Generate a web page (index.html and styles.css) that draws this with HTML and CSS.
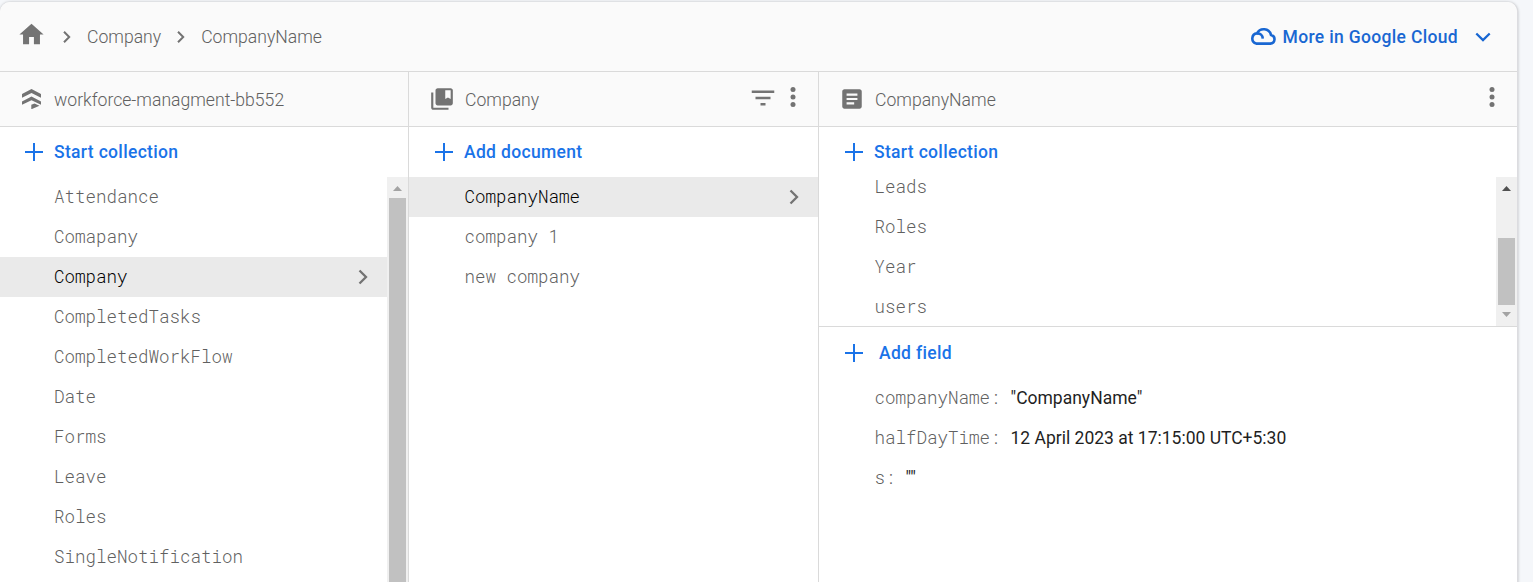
FILE: index.html
```html
<!DOCTYPE html>
<html lang="en">
<head>
<meta charset="utf-8">
<title>Cloud Firestore</title>
<link rel="stylesheet" href="styles.css">
</head>
<body>
<main class="card">
  <header class="topbar">
    <svg class="home" viewBox="0 0 24 24"><path d="M10 20v-6h4v6h5v-8h3L12 3 2 12h3v8z"/></svg>
    <svg class="crumb-arrow" viewBox="0 0 8 12"><path d="M1 .8 6.200 6 1 11.200"/></svg>
    <span class="crumb">Company</span>
    <svg class="crumb-arrow second" viewBox="0 0 8 12"><path d="M1 .8 6.200 6 1 11.200"/></svg>
    <span class="crumb">CompanyName</span>
    <a class="cloud-link">
      <svg class="cloud" viewBox="0 0 28 19"><path d="M7.200 16.600h14a4.400 4.400 0 0 0 .8-8.700A7.500 7.500 0 0 0 8 6.400a5.200 5.200 0 0 0-.8 10.200z"/><path d="M8 6.400c3.400-.2 5.600 1.800 5.800 5.200"/></svg>
      <span class="cloud-label">More in Google Cloud</span>
      <svg class="down" viewBox="0 0 16 10"><path d="M1.300 1.500 8 8.100l6.700-6.600"/></svg>
    </a>
  </header>
  <div class="panels">
    <section class="panel">
      <div class="panel-head">
        <svg class="db" viewBox="0 0 20 20"><path d="M0 5 9.500 0 19 5v3.700L9.500 4 0 8.700zM0 12.500l9.500-5 9.500 5v3.300l-9.500-4.600L0 15.800zM9.300 15.800l3.200-1.300 5 2.200-8.200 3.600z"/></svg>
        <span class="panel-title">workforce-managment-bb552</span>
      </div>
      <div class="add"><svg class="plus" viewBox="0 0 18 18"><path d="M9 0v18M0 9h18"/></svg><span>Start collection</span></div>
      <div class="scroller">
        <ul class="list">
          <li>Attendance</li>
          <li>Comapany</li>
          <li class="selected">Company<svg class="go" viewBox="0 0 10 16"><path d="M1.500 1.500 8 8l-6.500 6.500"/></svg></li>
          <li>CompletedTasks</li>
          <li>CompletedWorkFlow</li>
          <li>Date</li>
          <li>Forms</li>
          <li>Leave</li>
          <li>Roles</li>
          <li>SingleNotification</li>
        </ul>
        <div class="bar">
          <svg class="tri" viewBox="0 0 9 5"><path d="M0 5 4.500 0 9 5z"/></svg>
          <div class="thumb tall"></div>
        </div>
      </div>
    </section>
    <section class="panel">
      <div class="panel-head">
        <svg class="coll" viewBox="0 0 24 24"><path d="M4 6H2v14c0 1.100.9 2 2 2h14v-2H4zM20 2H8c-1.100 0-2 .9-2 2v12c0 1.100.9 2 2 2h12c1.100 0 2-.9 2-2V4c0-1.100-.9-2-2-2zm0 10-2.500-1.500L15 12V4h5z"/></svg>
        <span class="panel-title">Company</span>
        <svg class="filter" viewBox="0 0 24 24"><path d="M10 18h4v-2h-4zM3 6v2h18V6zm3 7h12v-2H6z"/></svg>
        <svg class="more" viewBox="0 0 6 20"><circle cx="3" cy="2.500" r="2.500"/><circle cx="3" cy="10" r="2.500"/><circle cx="3" cy="17.500" r="2.500"/></svg>
      </div>
      <div class="add"><svg class="plus" viewBox="0 0 18 18"><path d="M9 0v18M0 9h18"/></svg><span>Add document</span></div>
      <ul class="list">
        <li class="selected">CompanyName<svg class="go" viewBox="0 0 10 16"><path d="M1.500 1.500 8 8l-6.500 6.500"/></svg></li>
        <li>company 1</li>
        <li>new company</li>
      </ul>
    </section>
    <section class="panel">
      <div class="panel-head">
        <svg class="doc" viewBox="0 0 24 24"><path d="M19 3H5c-1.100 0-2 .9-2 2v14c0 1.100.9 2 2 2h14c1.100 0 2-.9 2-2V5c0-1.100-.9-2-2-2zm-5 14H7v-2h7zm3-4H7v-2h10zm0-4H7V7h10z"/></svg>
        <span class="panel-title">CompanyName</span>
        <svg class="more" viewBox="0 0 6 20"><circle cx="3" cy="2.500" r="2.500"/><circle cx="3" cy="10" r="2.500"/><circle cx="3" cy="17.500" r="2.500"/></svg>
      </div>
      <div class="add"><svg class="plus" viewBox="0 0 18 18"><path d="M9 0v18M0 9h18"/></svg><span>Start collection</span></div>
      <div class="scroller short">
        <ul class="list scrolled">
          <li>Leads</li>
          <li>Roles</li>
          <li>Year</li>
          <li>users</li>
        </ul>
        <div class="bar">
          <svg class="tri dark" viewBox="0 0 9 5"><path d="M0 5 4.500 0 9 5z"/></svg>
          <div class="thumb low"></div>
          <svg class="tri lower" viewBox="0 0 9 5"><path d="M0 0 4.500 5 9 0z"/></svg>
        </div>
      </div>
      <div class="add field-add"><svg class="plus" viewBox="0 0 18 18"><path d="M9 0v18M0 9h18"/></svg><span>Add field</span></div>
      <dl class="fields">
        <div class="field"><dt>companyName:</dt><dd>"CompanyName"</dd></div>
        <div class="field"><dt>halfDayTime:</dt><dd>12 April 2023 at 17:15:00 UTC+5:30</dd></div>
        <div class="field"><dt>s:</dt><dd>""</dd></div>
      </dl>
    </section>
  </div>
</main>
</body>
</html>
```
FILE: styles.css
```css
* { box-sizing: border-box; }
body {
  margin: 0;
  height: 582px;
  overflow: hidden;
  padding-top: 2px;
  background: #f5f7fa;
  color: #606060;
  font: 300 17.600px/24px Roboto, sans-serif;
}
ul, dl, dd { margin: 0; padding: 0; list-style: none; }
svg { display: block; flex: none; fill: #737373; }

.card {
  width: 1518px;
  height: 600px;
  display: flex;
  flex-direction: column;
  background: #fff;
  border-right: 1px solid #dcdce0;
  border-radius: 10px 10px 0 0;
  box-shadow: 0 0 3px rgba(0, 0, 0, .25);
  overflow: hidden;
}

.topbar {
  height: 70px;
  flex: none;
  display: flex;
  align-items: center;
  padding: 0 26px 0 17px;
  background: #fafafa;
  border-bottom: 1px solid #dadada;
}
.home { width: 29px; height: 29px; margin-top: -4px; }
.crumb-arrow { width: 8px; height: 12px; margin: 0 16px 0 17px; fill: none; stroke: #737373; stroke-width: 2; }
.crumb-arrow.second { margin-left: 16px; }
.cloud-link { margin-left: auto; display: flex; align-items: center; color: #1967d2; font-weight: 500; font-size: 17.500px; letter-spacing: .33px; }
.cloud { width: 28px; height: 19px; margin-right: 6px; fill: none; stroke: #1967d2; stroke-width: 2.600; }
.down { width: 16px; height: 10px; margin-left: 17px; fill: none; stroke: #1967d2; stroke-width: 2.300; }

.panels { flex: 1; display: grid; grid-template-columns: 409px 410px 1fr; }
.panel { min-width: 0; border-right: 1px solid #dadada; }
.panel:last-child { border-right: 0; }
.panel-head {
  height: 55px;
  display: flex;
  align-items: center;
  padding-left: 22px;
  background: #fafafa;
  border-bottom: 1px solid #dadada;
}
.panel-title { padding-top: 2px; }
.db { width: 20px; height: 20px; margin-right: 12px; }
.coll { width: 26px; height: 26px; margin: 0 10px 0 -2px; }
.doc { width: 26px; height: 26px; margin: 0 10px 0 -2px; }
.filter { width: 30px; height: 30px; margin: -3px 12px 0 auto; }
.more { width: 6px; height: 20px; margin: -4px 22px 0 0; }
.doc ~ .more { margin-left: auto; }

.add { height: 50px; display: flex; align-items: center; gap: 11px; padding-left: 25px; color: #1a73e8; font-weight: 500; font-size: 17.500px; letter-spacing: .33px; }
.panel:not(:first-child) .add { padding-left: 26px; }
.plus { width: 18px; height: 18px; stroke: #1a73e8; stroke-width: 2; }
.add.field-add { gap: 16px; height: 51px; }

.list { flex: 1; font: 300 17.500px/40px "Roboto Mono", "Liberation Mono", monospace; }
.list li { height: 40px; padding: 0 19px 0 54px; display: flex; align-items: center; justify-content: space-between; }
.list .selected { background: #eaeaea; color: #000; }
.panel:not(:first-child) .list li { padding-left: 55.500px; }
.go { width: 10px; height: 16px; fill: none; stroke: #737373; stroke-width: 2.300; }

.scroller { display: flex; height: 420px; overflow: hidden; }
.scroller.short { height: 150px; border-bottom: 1px solid #dadada; }
.scrolled li:first-child { height: 30px; line-height: 20px; align-items: flex-start; }
.bar { width: 21px; display: flex; flex-direction: column; align-items: center; background: #f0f0f0; }
.tri { width: 9px; height: 5px; margin: 9px 0 7px; fill: #a3a3a3; }
.tri.dark { fill: #505050; }
.tri.lower { margin-top: 7px; }
.thumb { width: 17px; background: #c1c1c1; }
.thumb.tall { flex: 1; }
.thumb.low { height: 67px; margin-top: 40px; }

.field { height: 40px; display: flex; align-items: center; gap: 10px; padding-left: 55.500px; }
dt { font: 300 17.500px/40px "Roboto Mono", "Liberation Mono", monospace; }
dd { color: #1f1f1f; font-weight: 400; font-size: 17.500px; }
```
